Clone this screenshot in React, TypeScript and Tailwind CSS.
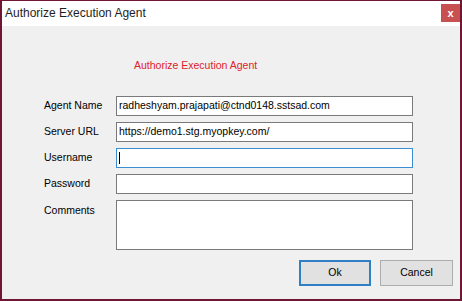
export default function App() {
  return (
    <div className="w-[462px] h-[301px] flex flex-col border-l-2 border-r-2 border-t border-b-2 border-[#6e1633] bg-[#f0f0f0] font-['Liberation_Sans',Arial,sans-serif] text-[10.5px] text-black">
      {/* title bar */}
      <div className="h-[25px] bg-white flex items-start justify-between shrink-0">
        <span className="pl-[3px] pt-[5px] text-[12px] leading-[14px] text-[#1e1e1e]">
          Authorize Execution Agent
        </span>
        <div className="mt-[3px] w-[19px] h-[18px] bg-[#c75050] flex items-center justify-center text-white text-[11px] font-bold leading-none">
          x
        </div>
      </div>

      <div className="flex-1 flex flex-col">
        <div className="pl-[132px] pt-[33px] h-[70px] text-[#e0202a] leading-[12px]">
          Authorize Execution Agent
        </div>

        <div className="grid grid-cols-[72px_297px] gap-y-[6px] pl-[42px]">
          <span className="self-center">Agent Name</span>
          <div className="h-[20px] bg-white border border-[#7a7a7a] flex items-center px-[2px] whitespace-nowrap">
            radheshyam.prajapati@ctnd0148.sstsad.com
          </div>

          <span className="self-center">Server URL</span>
          <div className="h-[20px] bg-white border border-[#7a7a7a] flex items-center px-[2px] whitespace-nowrap">
            https://demo1.stg.myopkey.com/
          </div>

          <span className="self-center">Username</span>
          <div className="h-[20px] bg-white border border-[#3c8dd3] flex items-center px-[2px]">
            <span className="w-px h-[12px] bg-black"></span>
          </div>

          <span className="self-center">Password</span>
          <div className="h-[20px] bg-white border border-[#7a7a7a]"></div>

          <span className="pt-[4px] leading-[12px]">Comments</span>
          <div className="h-[50px] bg-white border border-[#7a7a7a]"></div>
        </div>

        <div className="flex justify-end gap-[9px] pr-[7px] mt-[10px]">
          <button className="w-[72px] h-[26px] bg-[#e1e1e1] border-2 border-[#2f7fc4] flex items-center justify-center">
            Ok
          </button>
          <button className="w-[73px] h-[26px] bg-[#e1e1e1] border border-[#adadad] flex items-center justify-center">
            Cancel
          </button>
        </div>
      </div>
    </div>
  );
}
